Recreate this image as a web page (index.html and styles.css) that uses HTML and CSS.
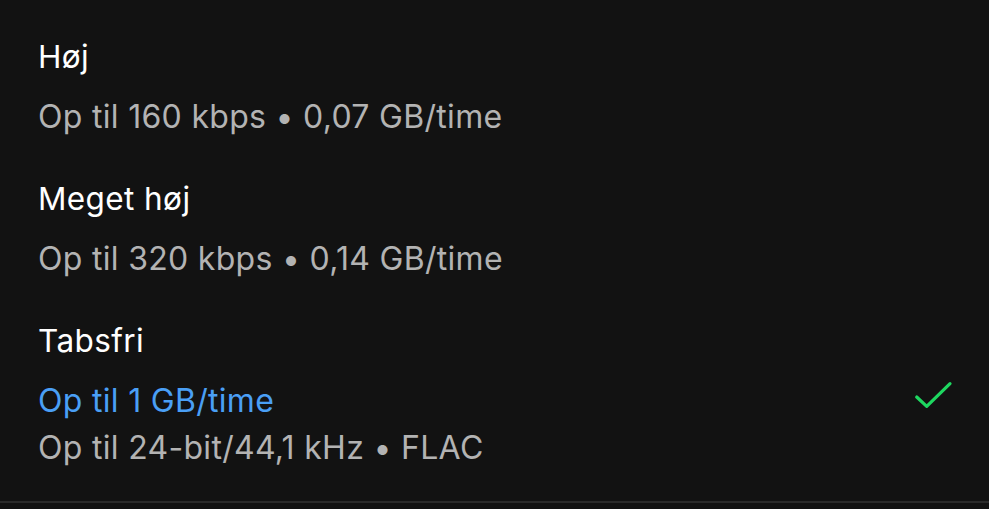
FILE: index.html
```html
<!DOCTYPE html>
<html lang="da">
<head>
<meta charset="utf-8">
<link rel="stylesheet" href="styles.css">
</head>
<body>
<div class="list">
  <div class="option">
    <div class="text">
      <div class="title">Høj</div>
      <div class="sub">Op til 160 kbps • 0,07 GB/time</div>
    </div>
  </div>
  <div class="option">
    <div class="text">
      <div class="title">Meget høj</div>
      <div class="sub">Op til 320 kbps • 0,14 GB/time</div>
    </div>
  </div>
  <div class="option">
    <div class="text">
      <div class="title">Tabsfri</div>
      <div class="sub accent">Op til 1 GB/time</div>
      <div class="sub">Op til 24-bit/44,1 kHz • FLAC</div>
    </div>
    <svg class="check" width="40" height="30" viewBox="0 0 40 30">
      <path d="M3.7 16 L13.7 25.3 L37 2.7" fill="none" stroke="#1ed760" stroke-width="3.2" stroke-linecap="round" stroke-linejoin="round"/>
    </svg>
  </div>
</div>
<div class="divider"></div>
</body>
</html>
```
FILE: styles.css
```css
html, body {
  margin: 0;
  padding: 0;
  background: #121212;
  width: 989px;
  height: 509px;
  overflow: hidden;
}
body {
  font-family: "Inter", "Noto Sans", sans-serif;
  -webkit-font-smoothing: antialiased;
}
.list {
  display: flex;
  flex-direction: column;
  gap: 35px;
  padding: 33px 0 0 38px;
  height: 468px;
  box-sizing: border-box;
}
.option {
  display: flex;
  align-items: flex-start;
  justify-content: space-between;
  padding-right: 36px;
}
.title {
  color: #ffffff;
  font-size: 31.5px;
  line-height: 47px;
  margin-bottom: 13px;
  letter-spacing: 0.4px;
}
.sub {
  color: #b3b3b3;
  font-size: 32px;
  line-height: 47px;
  letter-spacing: 0.3px;
}
.accent {
  color: #4a9ff5;
}
.check {
  margin-top: 64px;
}
.divider {
  height: 2px;
  margin-top: 33px;
  background: #2a2a2a;
}
```
